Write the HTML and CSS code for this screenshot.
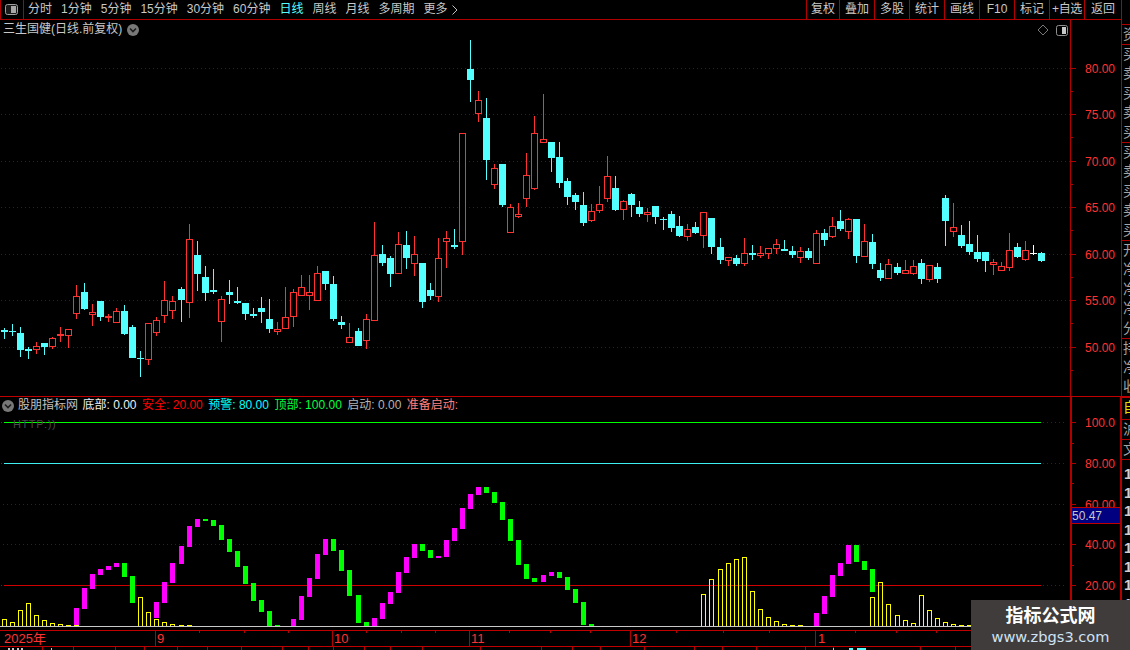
FILE: index.html
```html
<!DOCTYPE html>
<html lang="zh-CN">
<head>
<meta charset="utf-8">
<title>三生国健 日线</title>
<link rel="stylesheet" href="styles.css">
</head>
<body>
<div class="app">
  <div class="workspace">
    <header class="toolbar">
      <div class="panel-btn">
        <svg class="layout-icon" width="13" height="11" viewBox="0 0 13 11"><rect x="0.5" y="0.5" width="12" height="10" rx="2" fill="#1c1c1c" stroke="#a0a0a0"/><rect x="6" y="2" width="5" height="7" fill="#a8a8a8"/></svg>
      </div>
      <nav class="periods">
        <span>分时</span><span>1分钟</span><span>5分钟</span><span>15分钟</span><span>30分钟</span><span>60分钟</span>
        <span class="active">日线</span><span>周线</span><span>月线</span><span>多周期</span>
        <span class="more">更多<svg width="6" height="10" viewBox="0 0 6 10"><path d="M0.5 0.5 L5 5 L0.5 9.5" fill="none" stroke="#c0c0c0"/></svg></span>
      </nav>
      <nav class="tools">
        <span class="first">复权</span><span>叠加</span><span>多股</span><span>统计</span><span>画线</span><span>F10</span><span>标记</span><span class="tight">+自选</span><span class="last">返回</span>
      </nav>
    </header>

    <section class="pane pane-main">
      <svg id="mainChart" class="chart" width="1121" height="376" viewBox="0 20 1121 376"></svg>
      <div class="pane-title">
        <span>三生国健(日线.前复权)</span>
        <svg width="12" height="12" viewBox="0 0 12 12"><circle cx="6" cy="6" r="6" fill="#787878"/><path d="M3 4.5 L6 7.5 L9 4.5" fill="none" stroke="#1c1c1c" stroke-width="1.6"/></svg>
      </div>
      <div class="pane-icons">
        <svg width="12" height="12" viewBox="0 0 12 12"><path d="M6 1 L11 6 L6 11 L1 6 Z" fill="none" stroke="#787878"/></svg>
        <svg width="12" height="11" viewBox="0 0 12 11"><rect x="0.5" y="0.5" width="11" height="10" rx="2" fill="none" stroke="#909090"/><rect x="6" y="2" width="4" height="7" fill="#c8c8c8"/></svg>
      </div>
    </section>

    <section class="pane pane-sub">
      <svg id="subChart" class="chart" width="1121" height="233" viewBox="0 397 1121 233"></svg>
      <div class="legend">
        <svg width="12" height="12" viewBox="0 0 12 12"><circle cx="6" cy="6" r="6" fill="#787878"/><path d="M3 4.5 L6 7.5 L9 4.5" fill="none" stroke="#1c1c1c" stroke-width="1.6"/></svg>
        <span class="c-grey">股朋指标网</span>
        <span class="c-white">底部: 0.00</span>
        <span class="c-red">安全: 20.00</span>
        <span class="c-cyan">预警: 80.00</span>
        <span class="c-green">顶部: 100.00</span>
        <span class="c-silver">启动: 0.00</span>
        <span class="c-pink">准备启动:</span>
      </div>
      <div class="faint">HTTP:))</div>
    </section>

    <svg id="timeAxis" class="chart" width="1121" height="20" viewBox="0 630 1121 20"></svg>
  </div>

  <aside class="side">
    <div class="side-gap"></div>
    <div class="side-group one"><span>资</span></div>
    <div class="side-group"><span>买</span><span>卖</span><span>买</span><span>卖</span><span>买</span></div>
    <div class="side-group"><span>买</span><span>卖</span><span>买</span><span>卖</span><span>买</span></div>
    <div class="side-group"><span>开</span><span>净</span><span>净</span><span>净</span><span>分</span></div>
    <div class="side-group last"><span>持</span><span>净</span><span>收</span></div>
    <div class="side-tab yellow"><span>自</span></div>
    <div class="side-tab"><span>沪</span></div>
    <div class="side-tab"><span>文</span></div>
    <div class="side-nums"><span>1</span><span>1</span><span>1</span><span>1</span><span>1</span><span>1</span><span>1</span><span>1</span></div>
  </aside>
</div>

<div class="watermark">
  <div class="wm-title">指标公式网</div>
  <div class="wm-url">www.zbgs3.com</div>
</div>
<script src="script.js"></script>
</body>
</html>
```

FILE: styles.css
```css
* { box-sizing: border-box; }
html, body { margin: 0; padding: 0; background: #000; }
body {
  width: 1130px;
  height: 650px;
  overflow: hidden;
  position: relative;
  font-family: "Liberation Sans", "Noto Sans CJK SC", sans-serif;
  font-size: 12px;
  color: #c8c8c8;
}
.app { display: flex; height: 650px; }
.workspace { width: 1121px; display: flex; flex-direction: column; flex: none; }

.toolbar {
  height: 20px;
  display: flex;
  align-items: stretch;
  border-bottom: 1px solid #b00000;
  border-left: 1px solid #b00000;
  flex: none;
  width: 1122px;
}
.panel-btn {
  width: 23px;
  border-right: 1px solid #b00000;
  display: flex;
  align-items: center;
  padding-left: 4px;
}
.periods { display: flex; align-items: center; gap: 9px; padding-left: 4px; line-height: 19px; white-space: nowrap; }
.periods .active { color: #54ffff; }
.more { display: inline-flex; align-items: center; gap: 4px; }
.tools { display: flex; margin-left: auto; }
.tools span {
  width: 35px;
  border-left: 1px solid #b00000;
  text-align: center;
  line-height: 19px;
  white-space: nowrap;
}
.tools .first { width: 33px; }
.tools .tight { letter-spacing: -0.4px; }
.tools .last { width: 38px; border-right: 1px solid #b00000; }

.pane { position: relative; flex: none; }
.pane-main { height: 377px; border-bottom: 1px solid #c00000; }
.pane-sub { height: 233px; }
.chart { display: block; flex: none; }
.pane-title {
  position: absolute;
  left: 3px;
  top: 2px;
  display: flex;
  align-items: center;
  gap: 5px;
  line-height: 15px;
}
.pane-icons {
  position: absolute;
  left: 1037px;
  top: 4px;
  display: flex;
  align-items: center;
  gap: 7px;
}
.legend {
  position: absolute;
  left: 2px;
  top: 1px;
  display: flex;
  align-items: center;
  gap: 5.5px;
  line-height: 15px;
  white-space: nowrap;
}
.legend svg { margin-right: -1.5px; }
.c-grey { color: #c0c0c0; margin-right: -1px; }
.c-white { color: #f0f0f0; }
.c-red { color: #ff0000; }
.c-cyan { color: #00ffff; }
.c-green { color: #00ff40; }
.c-silver { color: #b4b4b4; }
.c-pink { color: #ff8080; }
.faint {
  position: absolute;
  left: 13px;
  top: 21px;
  font-size: 11px;
  line-height: 13px;
  color: #484848;
  letter-spacing: 0.6px;
}

.side {
  width: 9px;
  flex: none;
  display: flex;
  flex-direction: column;
  border-left: 1px solid #b00000;
  overflow: hidden;
}
.side-gap { height: 25px; flex: none; border-bottom: 1px solid #b00000; }
.side-group {
  height: 98px;
  flex: none;
  display: flex;
  flex-direction: column;
  padding-left: 1px;
  border-bottom: 1px solid #b00000;
}
.side-group.one { height: 20px; }
.side-group.last { height: 59px; border-bottom: 2px solid #c00000; }
.side-group span { height: 19.4px; font-size: 14px; line-height: 19px; color: #a4a4a4; white-space: nowrap; }
.side-tab {
  height: 20px;
  flex: none;
  padding-left: 1px;
  border-bottom: 1px solid #b00000;
  font-size: 14px;
  line-height: 19px;
  color: #a4a4a4;
}
.side-tab.yellow { color: #e0e000; height: 22px; }
.side-nums { display: flex; flex-direction: column; padding-left: 2px; padding-top: 5px; }
.side-nums span { height: 18.5px; font-size: 15px; line-height: 18px; font-weight: bold; color: #d0d0d0; }

.watermark {
  position: absolute;
  right: 0;
  bottom: 0;
  width: 159px;
  height: 50px;
  background: #403c3c;
  text-align: center;
}
.wm-title { color: #fff; font-size: 18px; font-weight: bold; line-height: 20px; margin-top: 6px; }
.wm-url { color: #cfe2f3; font-family: "DejaVu Sans", sans-serif; font-size: 14.6px; line-height: 18px; margin-top: 2px; white-space: nowrap; }

.axis-label { fill: #ff3232; font-size: 12px; }
.tag-label { fill: #c8c8c8; font-size: 12px; }
.time-label { fill: #ff3232; font-size: 13px; }
```

FILE: script.js
```js
var NS = 'http://www.w3.org/2000/svg';
var RED = '#ff3232', CYAN = '#54ffff', LINE = '#b00000', DOT = '#800000';

function el(parent, name, attrs, text) {
  var n = document.createElementNS(NS, name);
  for (var k in attrs) n.setAttribute(k, attrs[k]);
  if (text !== undefined) n.textContent = text;
  parent.appendChild(n);
  return n;
}
function box(p, x, y, w, h, fill) {
  return el(p, 'rect', { x: x, y: y, width: w, height: h, fill: fill, 'shape-rendering': 'crispEdges' });
}
function dotted(p, x1, x2, y, color) {
  for (var x = x1; x < x2; x += 4) box(p, x, y, 1, 1, color || DOT);
}

/* Candles: [x, kind, high, bodyTop, bodyBottom, low], in 3x crop coordinates of each group */
var groups = [
  { ox: 0, oy: 220, rows: [
    [13,'c',324,329,335,357],[37,'c',312,333,335,348],[61,'c',321,339,390,411],[85,'c',381,387,392,417],
    [109,'r',366,379,389,402],[133,'c',369,369,381,405],[157,'r',351,355,381,387],[181,'r',321,342,347,366],
    [205,'r',327,328,347,384],[229,'r',195,229,281,297],[253,'c',189,216,267,270],[277,'r',252,277,285,318],
    [301,'c',243,243,291,303],[325,'r',282,288,293,306],[349,'r',264,274,308,308],[373,'c',255,273,342,345],
    [397,'c',315,321,414,414],[421,'c',393,414,416,471],[445,'r',310,310,419,435],[469,'r',291,301,338,348],
    [493,'r',183,241,287,309],[517,'r',228,244,272,297],[544,'c',201,207,240,306],[568,'r',12,58,250,294],
    [592,'c',63,105,162,213],[616,'c',138,171,219,243],[640,'c',147,210,216,222],[664,'r',228,238,305,366],
    [688,'c',180,216,225,252],[712,'c',201,243,249,252],[736,'c',249,249,282,300],[760,'c',264,282,288,294],
    [784,'c',231,264,276,309],[808,'c',237,297,327,339],[832,'r',306,328,335,345],[856,'r',201,292,326,326],
    [880,'r',207,217,290,321],[904,'r',165,202,227,227],[928,'r',165,217,227,270],[952,'r',138,160,242,242],
    [976,'c',153,153,192,210],[1000,'c',168,192,297,303],[1024,'c',288,306,315,327],[1048,'r',309,352,368,368]
  ]},
  { ox: 340, oy: 30, rows: [
    [55,'c',894,903,948,948],[79,'r',852,868,932,957],[103,'r',576,676,872,872],[127,'c',645,672,699,708],
    [151,'c',678,684,732,771],[175,'r',606,643,731,731],[199,'c',603,645,684,717],[223,'r',618,673,701,738],
    [247,'c',699,699,816,834],[271,'c',759,780,798,810],[295,'r',624,685,800,816],[319,'r',603,625,635,714],
    [343,'c',597,645,651,657],[367,'r',310,310,635,675],[391,'c',30,117,150,216],[415,'r',183,211,253,276],
    [439,'c',204,264,390,450],[463,'r',402,415,464,477],[487,'c',402,402,525,531],[511,'r',522,532,608,608],
    [535,'r',519,553,560,564],[559,'r',369,436,506,531],[583,'r',258,310,476,480],[610,'r',192,328,338,338],
    [634,'c',336,336,384,426],[658,'c',336,381,459,474],[682,'c',444,453,501,525],[706,'c',489,495,516,540],
    [730,'c',486,525,579,588],[754,'r',522,544,572,576],[778,'r',468,523,542,549],[802,'r',378,439,506,516],
    [826,'c',438,474,540,543],[850,'r',510,514,539,570],[874,'c',489,492,525,561],[898,'c',513,531,552,561],
    [922,'r',534,547,554,576],[946,'c',528,528,561,582],[970,'c',561,567,570,600],[994,'c',543,552,594,606],
    [1018,'c',558,588,618,621],[1042,'r',582,598,621,633]
  ]},
  { ox: 690, oy: 150, rows: [
    [16,'c',216,231,249,252],[40,'r',186,187,257,294],[64,'c',204,204,291,312],[91,'c',264,291,330,342],
    [115,'r',321,322,332,348],[139,'c',315,324,342,348],[163,'r',264,310,341,348],[187,'c',285,309,315,330],
    [211,'r',288,310,317,324],[235,'r',294,295,311,327],[259,'r',267,283,296,312],[283,'c',270,297,303,303],
    [307,'c',288,303,315,324],[331,'r',291,304,323,339],[355,'c',294,303,324,330],[379,'r',240,250,341,341],
    [403,'c',237,249,270,288],[427,'r',201,229,261,264],[451,'c',180,213,237,243],[475,'r',204,208,245,267],
    [499,'c',207,207,318,339],[523,'r',222,274,320,320],[547,'c',252,276,342,357],[571,'c',339,360,384,393],
    [595,'r',327,343,386,386],[622,'c',339,351,369,375],[646,'r',330,361,371,371],[670,'r',330,349,371,375],
    [694,'c',327,339,387,402],[718,'r',346,346,389,396],[742,'c',339,351,387,399],[767,'c',135,144,213,288],
    [790,'r',159,232,245,261],[814,'c',225,255,288,294],[838,'c',213,282,306,315],[862,'c',255,306,327,336],
    [886,'c',306,306,333,366],[910,'r',327,337,344,375],[934,'r',336,349,362,362],[958,'r',249,301,353,363],
    [982,'c',279,291,321,324],[1006,'r',273,301,329,333],[1030,'w',285,310,312,315],[1054,'c',306,309,333,336]
  ]}
];

var main = document.getElementById('mainChart');
var X = [];

[[80,68],[75,114],[70,161],[65,207],[60,254],[55,300],[50,347]].forEach(function (g) {
  dotted(main, 1, 1070, g[1]);
  box(main, 1071, g[1], 5, 1, LINE);
  el(main, 'text', { x: 1085, y: g[1] + 5, 'class': 'axis-label' }, g[0].toFixed(2));
});
[91, 137, 184, 230, 277, 323, 370].forEach(function (y) { box(main, 1071, y, 2, 1, LINE); });
box(main, 1070, 20, 1, 376, LINE);

groups.forEach(function (g) {
  g.rows.forEach(function (r) {
    var x = Math.floor(g.ox + r[0] / 3);
    var Y = function (z) { return Math.round(g.oy + z / 3); };
    var hi = Y(r[2]), top = Y(r[3]), bot = Y(r[4]), lo = Y(r[5]);
    X.push(x);
    if (r[1] === 'r') {
      if (top > hi) box(main, x, hi, 1, top - hi, RED);
      if (lo > bot) box(main, x, bot, 1, lo - bot, RED);
      el(main, 'rect', { x: x - 3 + 0.5, y: top + 0.5, width: 6, height: Math.max(bot - top - 1, 1), fill: '#000', stroke: RED, 'shape-rendering': 'crispEdges' });
    } else {
      var col = r[1] === 'w' ? '#ffffff' : CYAN;
      box(main, x, hi, 1, lo - hi, col);
      box(main, x - 3, top, 7, Math.max(bot - top, 1), col);
    }
  });
});

/* Lower pane */
var sub = document.getElementById('subChart');
var BASE = 626;
function solid(y, color) {
  box(sub, 4, y, 1037, 1, color);
  box(sub, 1, y, 1, 1, '#c00000');
  dotted(sub, 1043, 1067, y);
}
dotted(sub, 3, 1067, 504);
dotted(sub, 3, 1067, 544);
solid(422, '#00ff00');
solid(463, '#40f0f0');
solid(585, '#d00000');
[[ '100.0', 422 ], [ '80.00', 463 ], [ '60.00', 504 ], [ '40.00', 544 ], [ '20.00', 585 ]].forEach(function (t) {
  box(sub, 1072, t[1], 4, 1, LINE);
  el(sub, 'text', { x: 1085, y: t[1] + 5, 'class': 'axis-label' }, t[0]);
});
[443, 483, 565, 606].forEach(function (y) { box(sub, 1072, y, 2, 1, LINE); });
box(sub, 1070, 397, 2, 233, LINE);
box(sub, 1120, 397, 1, 233, LINE);

/* Current value tag */
box(sub, 1072, 507, 48, 17, '#c00000');
box(sub, 1072, 508, 48, 15, '#000080');
el(sub, 'text', { x: 1072, y: 520, 'class': 'tag-label' }, '50.47');

function Y1(z) { return Math.round(480 + z / 3); }
function Y2(z) { return Math.round(530 + z / 3); }

var yellow = [
  [0,Y1(418)],[1,Y1(427)],[2,Y1(391)],[3,Y1(370)],[4,Y1(406)],[5,Y1(421)],[6,Y1(430)],[7,Y1(433)],[8,Y1(436)],[9,Y1(436)],
  [17,Y1(352)],[18,Y1(397)],[19,Y1(418)],[20,Y1(427)],[21,Y1(433)],[22,Y1(436)],[23,Y1(436)],
  [87,Y2(193)],[88,Y2(148)],[89,Y2(118)],[90,Y2(100)],[91,Y2(88)],[92,Y2(82)],[93,Y2(184)],[94,Y2(238)],[95,Y2(262)],
  [96,Y2(274)],[97,Y2(283)],[98,Y2(286)],[99,Y2(286)],
  [108,Y2(202)],[109,Y2(157)],[110,Y2(223)],[111,Y2(256)],[112,Y2(271)],[113,Y2(280)],[114,Y2(196)],[115,Y2(241)],
  [116,Y2(265)],[117,Y2(277)],[118,Y2(283)],[119,Y2(286)],[120,Y2(286)],[121,Y2(286)]
];
yellow.forEach(function (b) {
  var x = X[b[0]];
  el(sub, 'rect', { x: x - 2 + 0.5, y: b[1] + 0.5, width: 4, height: Math.max(BASE - b[1], 1), fill: 'none', stroke: '#ffff00', 'shape-rendering': 'crispEdges' });
});

var M = '#ff00ff', G = '#00ff00';
var bars1 = [
  [9,M,384,436],[10,M,324,387],[11,M,282,327],[12,M,267,285],[13,M,258,270],[14,M,249,261],[15,G,249,291],[16,G,288,369],
  [19,M,366,414],[20,M,306,369],[21,M,249,309],[22,M,198,252],[23,M,138,201],[24,M,117,141],[25,G,117,123],[26,G,120,138],
  [27,G,135,180],[28,G,177,216],[29,G,213,261],[30,G,258,312],[31,G,309,363],[32,G,360,396],[33,G,393,439],[34,G,435,439],
  [36,M,417,439],[37,M,348,420],[38,M,294,351],[39,M,222,297],[40,M,177,225],[41,G,177,213],[42,G,210,273],[43,G,270,348],
  [44,G,345,429],[45,G,426,439],[46,M,414,439],[47,M,369,417],[48,M,336,372],[49,M,276,339],[50,M,231,279],[51,M,192,234],
  [52,G,192,213],[53,G,210,234],[54,M,228,234],[55,M,180,231],[56,M,144,183],[57,M,84,147],[58,M,42,87],[59,M,21,45],
  [60,G,21,39],[61,G,36,69],[62,G,66,120],[63,G,117,183],[64,G,180,255],[65,G,252,297],[66,G,294,306],[67,M,285,306],
  [68,M,276,288],[69,G,276,294],[70,G,291,330],[71,G,327,369],[72,G,366,435],[73,G,432,439]
];
var bars2 = [
  [101,M,250,289],[102,M,198,252],[103,M,135,201],[104,M,99,138],[105,M,45,102],[106,G,45,96],[107,G,93,120],[108,G,117,186]
];
bars1.forEach(function (b) { box(sub, X[b[0]] - 2, Y1(b[2]), 5, Y1(b[3]) - Y1(b[2]), b[1]); });
bars2.forEach(function (b) { box(sub, X[b[0]] - 2, Y2(b[2]), 5, Y2(b[3]) - Y2(b[2]), b[1]); });
box(sub, 0, BASE, 1070, 1, '#c8c8c8');

/* Time axis */
var t = document.getElementById('timeAxis');
box(t, 0, 630, 1121, 1, '#c00000');
box(t, 0, 646, 1121, 1, '#c00000');
box(t, 1070, 631, 2, 15, LINE);
[['2025年',4,155],['9',157,155],['10',334,332],['11',471,469],['12',632,630],['1',818,815]].forEach(function (l) {
  box(t, l[2], 630, 1, 16, LINE);
  el(t, 'text', { x: l[1], y: 643, 'class': 'time-label' }, l[0]);
});
[199,244,288,366,401,435,509,550,590,676,723,769,855,896,936].forEach(function (x) { box(t, x, 631, 1, 2, LINE); });
[42,73,115,144,177,207,241,282,308,333,364,390,422,480,541,572,600,644,694,722,756,805,833,920,955].forEach(function (x) { box(t, x, 647, 1, 3, LINE); });
[[8,2],[12,2],[17,2],[21,2],[51,1],[833,1]].forEach(function (w) { box(t, w[0], 648, w[1], 2, '#c8c8c8'); });
box(t, 849, 648, 4, 2, CYAN);
box(t, 857, 648, 9, 2, CYAN);
```
